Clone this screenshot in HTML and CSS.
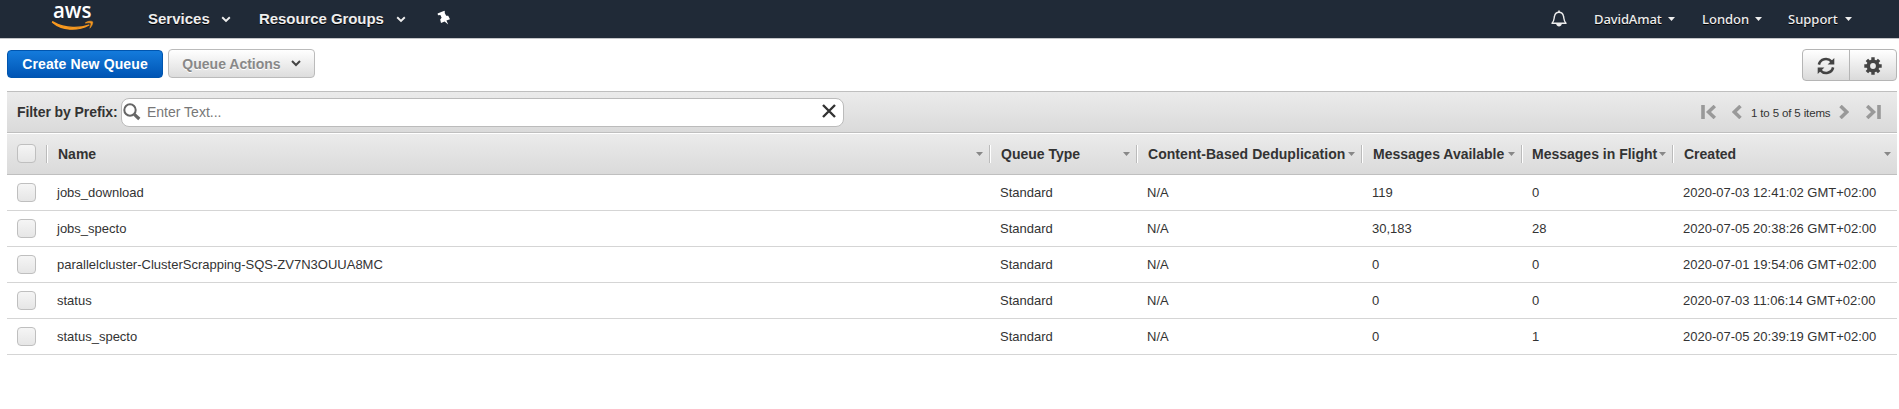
FILE: index.html
```html
<!DOCTYPE html>
<html lang="en">
<head>
<meta charset="utf-8">
<title>SQS Management Console</title>
<link rel="stylesheet" href="styles.css">
</head>
<body>
<header class="topnav">
  <svg class="logo" width="44" height="36" viewBox="0 -6 44 36">
    <text class="logo-text" x="1" y="15" textLength="38.500" lengthAdjust="spacingAndGlyphs">aws</text>
    <path d="M.4 19.200 C10 27.500 25 28.500 37 22 C29 25 14 26.500 .8 18.700 Z" fill="#f7981f" stroke="#f7981f" stroke-width="1.200" stroke-linejoin="round"/>
    <path d="M33.500 19.600 C36.500 17.600 40 18 40.700 18.800 C41 20.500 40 23.200 37.800 25.300 C38.400 23 39.300 21 38.800 20.300 C38 19.500 36 19.800 33.500 20.200 Z" fill="#f7981f" stroke="#f7981f" stroke-width=".5"/>
  </svg>
  <nav class="menu">
    <a class="menu-item services">Services</a>
    <svg class="chev c1" width="10" height="7" viewBox="0 0 10 7"><path d="M1.200 1.300 L5 5 L8.800 1.300" fill="none" stroke="#eee" stroke-width="1.900"/></svg>
    <a class="menu-item groups">Resource Groups</a>
    <svg class="chev c2" width="10" height="7" viewBox="0 0 10 7"><path d="M1.200 1.300 L5 5 L8.800 1.300" fill="none" stroke="#eee" stroke-width="1.900"/></svg>
    <svg class="pin" width="14" height="16" viewBox="0 0 14 16"><path d="M4.200 2 L7.400 .8 L8 2 L7.600 2.800 L9.200 5.800 L11.200 5.700 L13 9.200 L9.400 10.600 L11.200 14.600 L7.600 11.500 L4 13 L3.200 9.400 L4.600 7.800 L3.400 4.900 L1 5.200 L.6 3.500 Z" fill="#fff"/></svg>
  </nav>
  <div class="account">
    <svg class="bell" width="18" height="18" viewBox="0 0 18 18"><path d="M2 13.300 C4.500 11 3.800 8.500 4.600 5.800 C5.200 3.500 6.800 2.300 9 2.300 S12.800 3.500 13.400 5.800 C14.200 8.500 13.500 11 16 13.300 Z" fill="none" stroke="#eee" stroke-width="1.400" stroke-linejoin="round"/><path d="M9 .4 V2.300" stroke="#eee" stroke-width="1.600"/><path d="M6.200 14 H11.800 C11.400 17.300 6.600 17.300 6.200 14 Z" fill="#eee"/></svg>
    <a class="acct user">DavidAmat</a><i class="tri"></i>
    <a class="acct region">London</a><i class="tri"></i>
    <a class="acct support">Support</a><i class="tri"></i>
  </div>
</header>
<main>
  <div class="actions">
    <button class="btn primary">Create New Queue</button>
    <button class="btn secondary">Queue Actions<svg width="10" height="7" viewBox="0 0 10 7"><path d="M1 1 L5 5 L9 1" fill="none" stroke="#444" stroke-width="2"/></svg></button>
    <div class="tools">
      <button class="tool"><svg width="18" height="18" viewBox="0 0 18 18"><g fill="none" stroke="#444" stroke-width="2.600"><path d="M1.900 7.600 C3.200 1.600 10.500 .1 14.700 4.600"/><path d="M16.100 10.400 C14.800 16.400 7.500 17.900 3.300 13.400"/></g><path d="M17.300 1 V7.600 H10.600 Z M.7 17 V10.400 H7.400 Z" fill="#444"/></svg></button>
      <button class="tool"><svg width="18" height="18" viewBox="0 0 18 18"><circle cx="9" cy="9" r="4.700" fill="none" stroke="#444" stroke-width="3.600"/><g stroke="#444" stroke-width="3.400"><path d="M9 .3 V3.500 M9 14.500 V17.700 M.3 9 H3.500 M14.500 9 H17.700 M2.900 2.900 L5.200 5.200 M12.800 12.800 L15.100 15.100 M15.100 2.900 L12.800 5.200 M5.200 12.800 L2.900 15.100"/></g></svg></button>
    </div>
  </div>
  <div class="filter">
    <label class="filter-label">Filter by Prefix:</label>
    <div class="search">
      <svg width="18" height="18" viewBox="0 0 18 18"><circle cx="7" cy="7" r="5.700" fill="none" stroke="#666" stroke-width="2"/><path d="M11.300 11.300 L16.300 16" stroke="#666" stroke-width="3.200"/></svg>
      <span class="placeholder">Enter Text...</span>
      <svg class="clear" width="14" height="14" viewBox="0 0 14 14"><path d="M1 1 L13 13 M13 1 L1 13" stroke="#333" stroke-width="2.400"/></svg>
    </div>
    <div class="pager">
      <svg width="16" height="14" viewBox="0 0 16 14"><path d="M2 0 V14" stroke="#999" stroke-width="3.600"/><path d="M13.800 1 L7.500 7 L13.800 13" fill="none" stroke="#999" stroke-width="3.500"/></svg>
      <svg class="prev" width="10" height="14" viewBox="0 0 10 14"><path d="M8.500 1 L2.300 7 L8.500 13" fill="none" stroke="#999" stroke-width="3.500"/></svg>
      <span class="pager-text">1 to 5 of 5 items</span>
      <svg class="next" width="10" height="14" viewBox="0 0 10 14"><path d="M1.500 1 L7.700 7 L1.500 13" fill="none" stroke="#999" stroke-width="3.500"/></svg>
      <svg width="16" height="14" viewBox="0 0 16 14"><path d="M14 0 V14" stroke="#999" stroke-width="3.600"/><path d="M2.200 1 L8.500 7 L2.200 13" fill="none" stroke="#999" stroke-width="3.500"/></svg>
    </div>
  </div>
  <div class="row head">
    <div class="check"><span class="box"></span></div>
    <div class="th">Name<i class="sort"></i></div>
    <div class="th">Queue Type<i class="sort"></i></div>
    <div class="th dedup">Content-Based Deduplication<i class="sort"></i></div>
    <div class="th">Messages Available<i class="sort"></i></div>
    <div class="th flight">Messages in Flight<i class="sort"></i></div>
    <div class="th">Created<i class="sort"></i></div>
  </div>
  <div class="row"><div class="check"><span class="box"></span></div><div class="td">jobs_download</div><div class="td">Standard</div><div class="td">N/A</div><div class="td">119</div><div class="td">0</div><div class="td">2020-07-03 12:41:02 GMT+02:00</div></div>
  <div class="row"><div class="check"><span class="box"></span></div><div class="td">jobs_specto</div><div class="td">Standard</div><div class="td">N/A</div><div class="td">30,183</div><div class="td">28</div><div class="td">2020-07-05 20:38:26 GMT+02:00</div></div>
  <div class="row"><div class="check"><span class="box"></span></div><div class="td">parallelcluster-ClusterScrapping-SQS-ZV7N3OUUA8MC</div><div class="td">Standard</div><div class="td">N/A</div><div class="td">0</div><div class="td">0</div><div class="td">2020-07-01 19:54:06 GMT+02:00</div></div>
  <div class="row"><div class="check"><span class="box"></span></div><div class="td">status</div><div class="td">Standard</div><div class="td">N/A</div><div class="td">0</div><div class="td">0</div><div class="td">2020-07-03 11:06:14 GMT+02:00</div></div>
  <div class="row"><div class="check"><span class="box"></span></div><div class="td">status_specto</div><div class="td">Standard</div><div class="td">N/A</div><div class="td">0</div><div class="td">1</div><div class="td">2020-07-05 20:39:19 GMT+02:00</div></div>
</main>
</body>
</html>
```
FILE: styles.css
```css
* { box-sizing: border-box; }
body { margin: 0; background: #fff; color: #333; font: 13px "Liberation Sans", Arial, sans-serif; }
svg { display: block; flex: none; }
.topnav { height: 39px; background: #202a37; border-bottom: 1px solid #c3c5c8; display: flex; align-items: flex-start; }
.logo { margin: -3px 0 0 52px; overflow: visible; }
.logo-text { font: 600 21px/1 "Open Sans", sans-serif; fill: #fff; }
.menu { display: flex; align-items: center; height: 38px; margin-left: 52px; }
.menu-item { font-weight: bold; font-size: 15px; color: #eee; white-space: nowrap; text-shadow: 0 1px 0 #000; margin-top: -1px; }
.services { width: 61px; }
.groups { width: 126px; letter-spacing: -0.070px; }
.c1 { margin: 0 28px 0 12px; }
.c2 { margin: 0 31px 0 11px; }
.pin { margin-top: -2px; }
.account { display: flex; align-items: center; height: 38px; margin-left: auto; padding-right: 47px; }
.bell { margin-right: 26px; }
.acct { font: 500 13px "Noto Sans", sans-serif; color: #eee; white-space: nowrap; text-shadow: 0 1px 0 #000; margin-top: -1px; }
.user { width: 65px; letter-spacing: -0.100px; }
.region { width: 44px; margin-left: 27px; }
.support { width: 48px; margin-left: 26px; }
.tri { width: 7px; height: 4px; margin-left: 9px; background: #eee; clip-path: polygon(0 0, 100% 0, 50% 100%); }
main { padding: 0 2px 0 7px; }
.actions { display: flex; align-items: flex-start; height: 52px; padding-top: 10px; }
.btn { font: bold 14px "Liberation Sans", Arial, sans-serif; border-radius: 4px; padding: 0; display: flex; align-items: center; justify-content: center; white-space: nowrap; }
.primary { width: 156px; height: 28px; margin-top: 1px; color: #fff; border: 1px solid #0055ae; background: linear-gradient(#147bdc, #0055b5); letter-spacing: 0.120px; }
.secondary { width: 147px; height: 29px; margin-left: 5px; color: #888; border: 1px solid #bbb; background: linear-gradient(#fff, #ddd); text-shadow: 0 1px 0 #fff; }
.secondary svg { margin-left: 10px; }
.tools { display: flex; margin-left: auto; width: 95px; height: 32px; border: 1px solid #b5b5b5; border-radius: 4px; background: linear-gradient(#fff, #dadada); }
.tool { flex: 1; border: 0; padding: 2px 0 0; background: none; display: flex; align-items: center; justify-content: center; }
.tool + .tool { border-left: 1px solid #b5b5b5; }
.filter { display: flex; align-items: center; height: 42px; border-top: 1px solid #bfbfbf; border-bottom: 1px solid #bfbfbf; background: linear-gradient(#ebebeb, #dadada); }
.filter-label { width: 104px; margin-left: 10px; font-weight: bold; font-size: 14px; letter-spacing: -0.080px; white-space: nowrap; }
.search { width: 723px; height: 29px; display: flex; align-items: center; border: 1px solid #bbb; border-radius: 8px; background: #fff; padding: 0 7px 0 1px; }
.search > svg:first-child { margin-top: -1px; }
.placeholder { margin-left: 6px; font-size: 14px; color: #777; }
.clear { margin: -2px 0 0 auto; }
.pager { display: flex; align-items: center; margin-left: auto; padding-right: 16px; }
.prev { margin-left: 15px; }
.pager-text { font-size: 11.500px; letter-spacing: -0.140px; width: 79px; margin: 2px 9px 0 9px; white-space: nowrap; }
.next { margin-right: 16px; }
.row { display: grid; grid-template-columns: 39px 943px 147px 225px 160px 151px 1fr; height: 36px; align-items: center; border-bottom: 1px solid #d5d5d5; }
.head { height: 41px; margin-top: 1px; border-color: #bfbfbf; background: linear-gradient(#ebebeb, #dadada); }
.check { padding-left: 10px; }
.head .check { padding-bottom: 1px; }
.box { display: block; width: 19px; height: 19px; border: 1px solid #bfbfbf; border-radius: 4px; background: linear-gradient(#f5f5f5, #e6e6e6); }
.td { padding-left: 11px; white-space: nowrap; }
.th { display: flex; align-items: center; height: 18px; border-left: 1px solid #bbb; box-shadow: inset 1px 0 0 #fff; padding: 0 6px 0 11px; font-weight: bold; font-size: 14px; white-space: nowrap; }
.dedup { letter-spacing: 0.050px; }
.flight { padding-left: 10px; }
.sort { flex: none; width: 7px; height: 4px; margin-left: auto; background: #888; clip-path: polygon(0 0, 100% 0, 50% 100%); }
```
